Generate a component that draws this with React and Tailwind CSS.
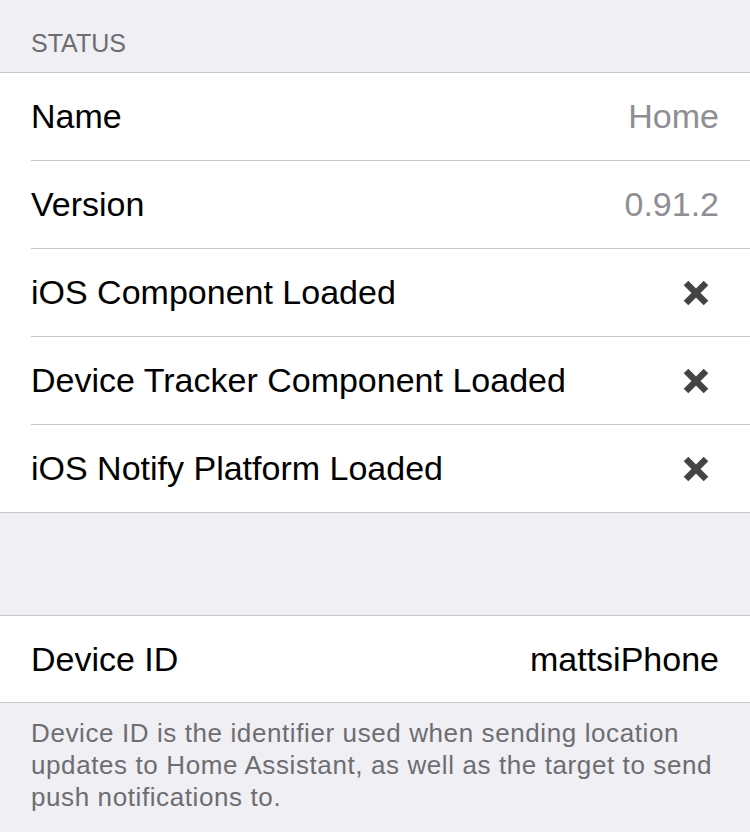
import React from "react";

const font = { fontFamily: '"Liberation Sans", Arial, sans-serif' };

const Cross = () => (
    <svg width="28" height="28" viewBox="0 0 28 28" className="block">
        <path d="M4 4 L24 24 M24 4 L4 24" stroke="#444444" strokeWidth="6.5" strokeLinecap="butt" />
    </svg>
);

const Row = ({ label, value, cross, last }) => (
    <div className="pl-[31px]">
        <div
            className={`flex items-center justify-between pr-[31px] ${
                last ? "h-[87px]" : "h-[88px] border-b border-[#c8c7cc]"
            }`}
        >
            <span className="text-[34px] text-black">{label}</span>
            {cross ? (
                <span className="mr-[9px]">
                    <Cross />
                </span>
            ) : (
                <span className="text-[34px] text-[#8e8e93]">{value}</span>
            )}
        </div>
    </div>
);

const App = () => {
    const rows = [
        { label: "Name", value: "Home" },
        { label: "Version", value: "0.91.2" },
        { label: "iOS Component Loaded", cross: true },
        { label: "Device Tracker Component Loaded", cross: true },
        { label: "iOS Notify Platform Loaded", cross: true },
    ];

    return (
        <div className="w-[750px] h-[832px] bg-[#efeff4] overflow-hidden" style={font}>
            <div className="h-[72px] px-[31px] flex items-end pb-[10px]">
                <span className="text-[25px] text-[#6d6d72] uppercase">Status</span>
            </div>
            <div className="bg-white border-y border-[#c8c7cc]">
                {rows.map((r, i) => (
                    <Row key={r.label} {...r} last={i === rows.length - 1} />
                ))}
            </div>
            <div className="h-[102px]" />
            <div className="bg-white border-y border-[#c8c7cc]">
                <div className="flex items-center justify-between h-[86px] px-[31px]">
                    <span className="text-[34px] text-black">Device ID</span>
                    <span className="text-[34px] text-black">mattsiPhone</span>
                </div>
            </div>
            <p className="px-[31px] pt-[14px] text-[26px] leading-[32px] tracking-[0.6px] text-[#6d6d72]">
                Device ID is the identifier used when sending location
                <br />
                updates to Home Assistant, as well as the target to send
                <br />
                push notifications to.
            </p>
        </div>
    );
};

export default App;
